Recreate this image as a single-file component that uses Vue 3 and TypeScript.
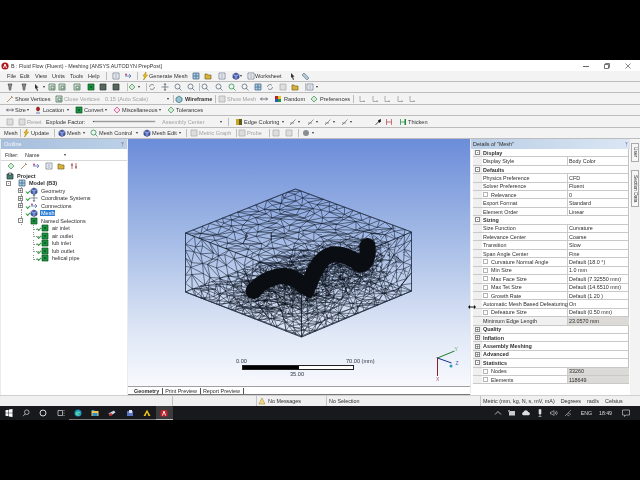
<script setup lang="ts">
type Layer = { d: string; f?: string; s?: string };
type Item = { x: number; kind: 'gap' | 'ico' | 'text' | 'arrow' | 'sep' | 'slider' | 'off'; value?: string; bold?: boolean };

const ICONS: Record<string, Layer[]> = {
  bolt: [{ d: 'M5 0L2 4h2L2.5 8 6.5 3H4.500z', f: '#f4c81c', s: '#b58f10' }],
  cube: [
    { d: 'M4 1l3 1.500v3.500L4 7.500 1 6V2.500z', f: '#4a63b8', s: '#28366f' },
    { d: 'M1 2.500L4 4l3-1.500M4 4v3.500', s: '#c8d2f0' },
  ],
  green: [{ d: 'M1 1h6v6H1z', f: '#1f8f3f', s: '#07551d' }, { d: 'M3 3h2v2H3z', f: '#063' }],
  gbox: [{ d: 'M1 1h6v6H1z', f: '#dfe7df', s: '#3d6b4d' }, { d: 'M3 3h3v3H3z', s: '#3d6b4d' }],
  dbox: [{ d: 'M1 1h6v6H1z', f: '#56685c', s: '#2b3a31' }],
  sheet: [{ d: 'M1 1h6v6H1z', f: '#fff', s: '#5f6f88' }, { d: 'M2.500 3h3M2.500 5h3', s: '#5f6f88' }],
  folder: [{ d: 'M1 2h2l1 1h3v4H1z', f: '#d9b23c', s: '#7a6420' }],
  tree: [{ d: 'M1 4h6M5 2l2 2-2 2', s: '#395ba8' }, { d: 'M1 2.500a1 1 0 102 0 1 1 0 10-2 0', f: '#c2428b' }],
  grid: [{ d: 'M1 1h6v6H1zM1 4h6M4 1v6', f: '#a8d2e8', s: '#3d5c80' }],
  zoom: [{ d: 'M1 3.500a2.500 2.500 0 105 0 2.500 2.500 0 10-5 0M5.200 5.200L7.500 7.500', s: '#4b5f70' }],
  zoomg: [{ d: 'M1 3.500a2.500 2.500 0 105 0 2.500 2.500 0 10-5 0M5.200 5.200L7.500 7.500', s: '#168a3a' }],
  rot: [{ d: 'M1.500 4a2.500 2.500 0 014.500-1.500M6.500 4A2.500 2.500 0 012 5.500', s: '#53616e' }],
  move: [{ d: 'M4 .5v7M.5 4h7M4 .5L3 2M4 .5L5 2M4 7.500L3 6M4 7.500L5 6', s: '#53616e' }],
  pin: [{ d: 'M2 1h4L5 4v2L4 7.500 3 6V4z', f: '#8b8d90', s: '#4b4c50' }],
  axis: [{ d: 'M2 1v5.500h5M5.500 5.500l1.500 1', s: '#8a8f93' }],
  vert: [{ d: 'M1 7L6 2M5 1l2 2', s: '#8f6a30' }],
  wire: [{ d: 'M1 3l3-2 3 2v3l-3 2-3-2z', f: '#9bc3d3', s: '#2b6a70' }],
  red: [{ d: 'M2.500 3a1.500 2 0 103 0 1.500 2 0 10-3 0', f: '#b32222', s: '#7c1010' }, { d: 'M2 7h4', s: '#2b4aa0' }],
  rand: [{ d: 'M1 1h3v3H1z', f: '#b62424' }, { d: 'M4 1h3v3H4z', f: '#e8c22a' }, { d: 'M1 4h3v3H1z', f: '#2b55b8' }, { d: 'M4 4h3v3H4z', f: '#259a3c' }],
  tol: [{ d: 'M4 1l3 3-3 3-3-3z', f: '#d3edd6', s: '#3c8a50' }],
  misc: [{ d: 'M4 1l3 3-3 3-3-3z', f: '#fde', s: '#c03878' }],
  size: [{ d: 'M.5 4h7M2 2.500L.5 4 2 5.500M6 2.500L7.500 4 6 5.500', s: '#445' }],
  dark: [{ d: 'M1.500 7L6.500 1.500', s: '#111' }, { d: 'M4 2.500l2.500-1.500.5 2.500-2 1.500z', f: '#111' }],
  hh: [{ d: 'M1.500 1v6M6.500 1v6M1.500 4h5', s: '#b04444' }],
  thick: [{ d: 'M1.500 1v6M1.500 4h5', s: '#1a8a34' }, { d: 'M5.500 1h1.500v6H5.500z', f: '#1a8a34' }],
  edge: [{ d: 'M1 1h3v6H1z', f: '#c9a420' }, { d: 'M4 1h3v6H4z', f: '#5d5a20' }],
  line: [{ d: 'M1 7L6.500 1.500M1 5h4', s: '#6a6a6a' }],
  dim: [{ d: 'M1 1h6v6H1z', f: '#ddd', s: '#aaa' }],
  dot: [{ d: 'M1 4a3 3 0 106 0 3 3 0 10-6 0', f: '#8a8d90' }],
  cursor: [{ d: 'M2 1l3.500 3.500-1.500.2L5 7.500 4 8 3 5l-1 1z', f: '#333' }],
  tag: [{ d: 'M1 3l2-2 5 5-2 2z', f: '#b3c8d6', s: '#667f90' }],
  bars: [{ d: 'M2 1v6M6 1v6', s: '#b22' }, { d: 'M1 3h2M5 5h2', s: '#224' }],
  proj: [{ d: 'M1 2h6v5H1z', f: '#48806a', s: '#234' }, { d: 'M2.500 1h3v2h-3z', f: '#e3e3c8', s: '#234' }],
};

const ico = (x: number, value: string): Item => ({ x, kind: 'ico', value });
const txt = (x: number, value: string, bold = false): Item => ({ x, kind: 'text', value, bold });
const off = (x: number, value: string): Item => ({ x, kind: 'off', value });
const arr = (x: number): Item => ({ x, kind: 'arrow' });
const sep = (x: number): Item => ({ x, kind: 'sep' });

const rows: { h: number; items: Item[] }[] = [
  { h: 11, items: [txt(7, 'File'), txt(20, 'Edit'), txt(35, 'View'), txt(52, 'Units'), txt(70, 'Tools'), txt(88, 'Help'), sep(106), ico(112, 'sheet'), ico(124, 'tree'), sep(137), ico(141, 'bolt'), txt(149, 'Generate Mesh'), ico(192, 'grid'), ico(204, 'folder'), ico(218, 'sheet'), ico(232, 'cube'), arr(240), ico(247, 'sheet'), txt(255, 'Worksheet'), ico(289, 'cursor'), ico(301, 'tag')] },
  { h: 11, items: [ico(6, 'pin'), ico(20, 'pin'), ico(33, 'cursor'), arr(43), ico(48, 'gbox'), ico(58, 'gbox'), ico(73, 'gbox'), ico(87, 'green'), ico(99, 'dbox'), ico(112, 'dbox'), sep(127), ico(128, 'tol'), arr(138), sep(146), ico(148, 'rot'), ico(161, 'move'), ico(174, 'zoom'), ico(187, 'zoom'), sep(199), ico(201, 'zoom'), ico(215, 'zoom'), ico(228, 'zoomg'), ico(241, 'zoom'), ico(254, 'grid'), ico(266, 'rot'), ico(279, 'dim'), ico(291, 'folder'), sep(305), ico(306, 'sheet'), arr(316)] },
  { h: 12, items: [ico(6, 'vert'), txt(15, 'Show Vertices'), ico(55, 'gbox'), off(64, 'Close Vertices'), off(105, '0.15 (Auto Scale)'), arr(167), sep(173), ico(175, 'wire'), txt(185, 'Wireframe', true), sep(215), ico(218, 'dim'), off(227, 'Show Mesh'), ico(260, 'size'), ico(274, 'rand'), txt(284, 'Random'), ico(310, 'tol'), txt(320, 'Preferences'), sep(353), ico(358, 'axis'), ico(371, 'axis'), ico(383, 'axis'), ico(396, 'axis'), ico(408, 'axis')] },
  { h: 11, items: [ico(6, 'size'), txt(15, 'Size'), arr(27), ico(34, 'red'), txt(43, 'Location'), arr(67), ico(75, 'green'), txt(84, 'Convert'), arr(105), ico(113, 'misc'), txt(122, 'Miscellaneous'), arr(159), ico(167, 'tol'), txt(176, 'Tolerances')] },
  { h: 12, items: [ico(6, 'dim'), ico(18, 'dim'), off(27, 'Reset'), txt(46, 'Explode Factor:'), { x: 93, kind: 'slider' }, off(162, 'Assembly Center'), arr(220), sep(228), ico(235, 'edge'), txt(244, 'Edge Coloring'), arr(282), ico(289, 'line'), arr(298), ico(307, 'line'), arr(316), ico(324, 'line'), arr(333), ico(341, 'line'), arr(350), ico(374, 'dark'), ico(385, 'hh'), ico(399, 'thick'), txt(408, 'Thicken')] },
  { h: 11, items: [txt(4, 'Mesh'), sep(20), ico(22, 'bolt'), txt(31, 'Update'), sep(54), ico(58, 'cube'), txt(67, 'Mesh'), arr(83), ico(90, 'zoomg'), txt(99, 'Mesh Control'), arr(136), ico(143, 'cube'), txt(152, 'Mesh Edit'), arr(179), sep(186), ico(190, 'dim'), off(199, 'Metric Graph'), sep(236), ico(238, 'dim'), off(247, 'Probe'), sep(269), ico(272, 'dim'), ico(285, 'dim'), sep(298), ico(302, 'dot'), arr(312)] },
];

// each slot runs up to the next item so the row stays in normal flow
const slots = rows.map((r) => {
  const withStart: Item[] = r.items[0].x > 0 ? [{ x: 0, kind: 'gap' }, ...r.items] : r.items;
  return { h: r.h, items: withStart.map((it, i) => ({ ...it, w: (withStart[i + 1]?.x ?? it.x + 30) - it.x })) };
});

const tree = [
  { label: 'Project', depth: 0, icon: 'proj', bold: true, exp: '' },
  { label: 'Model (B3)', depth: 1, icon: 'grid', bold: true, exp: '-' },
  { label: 'Geometry', depth: 2, icon: 'cube', exp: '+', check: true },
  { label: 'Coordinate Systems', depth: 2, icon: 'move', exp: '+', check: true },
  { label: 'Connections', depth: 2, icon: 'tree', exp: '+', check: true },
  { label: 'Mesh', depth: 2, icon: 'cube', exp: '', check: true, active: true },
  { label: 'Named Selections', depth: 2, icon: 'green', exp: '-' },
  { label: 'air inlet', depth: 3, icon: 'green', exp: '', check: true },
  { label: 'air outlet', depth: 3, icon: 'green', exp: '', check: true },
  { label: 'lub inlet', depth: 3, icon: 'green', exp: '', check: true },
  { label: 'lub outlet', depth: 3, icon: 'green', exp: '', check: true },
  { label: 'helical pipe', depth: 3, icon: 'green', exp: '', check: true },
];

type Detail = { name: string; value?: string; group?: string; box?: boolean; grey?: boolean };
const details: Detail[] = [
  { name: 'Display', group: '-' },
  { name: 'Display Style', value: 'Body Color' },
  { name: 'Defaults', group: '-' },
  { name: 'Physics Preference', value: 'CFD' },
  { name: 'Solver Preference', value: 'Fluent' },
  { name: 'Relevance', value: '0', box: true },
  { name: 'Export Format', value: 'Standard' },
  { name: 'Element Order', value: 'Linear' },
  { name: 'Sizing', group: '-' },
  { name: 'Size Function', value: 'Curvature' },
  { name: 'Relevance Center', value: 'Coarse' },
  { name: 'Transition', value: 'Slow' },
  { name: 'Span Angle Center', value: 'Fine' },
  { name: 'Curvature Normal Angle', value: 'Default (18.0 °)', box: true },
  { name: 'Min Size', value: '1.0 mm', box: true },
  { name: 'Max Face Size', value: 'Default (7.32550 mm)', box: true },
  { name: 'Max Tet Size', value: 'Default (14.6510 mm)', box: true },
  { name: 'Growth Rate', value: 'Default (1.20 )', box: true },
  { name: 'Automatic Mesh Based Defeaturing', value: 'On' },
  { name: 'Defeature Size', value: 'Default (0.50 mm)', box: true },
  { name: 'Minimum Edge Length', value: '23.0570 mm', grey: true },
  { name: 'Quality', group: '+' },
  { name: 'Inflation', group: '+' },
  { name: 'Assembly Meshing', group: '+' },
  { name: 'Advanced', group: '+' },
  { name: 'Statistics', group: '-' },
  { name: 'Nodes', value: '33260', box: true, grey: true },
  { name: 'Elements', value: '118649', box: true, grey: true },
];

function rng(seed: number) {
  return () => {
    seed = (seed + 0x6d2b79f5) | 0;
    let t = Math.imul(seed ^ (seed >>> 15), 1 | seed);
    t = (t + Math.imul(t ^ (t >>> 7), 61 | t)) ^ t;
    return ((t ^ (t >>> 14)) >>> 0) / 4294967296;
  };
}

type P = [number, number];
const A: P = [296, 189], B: P = [412, 232], C: P = [302, 278], D: P = [186, 233];
const drop = (p: P): P => [p[0], p[1] + 59];
const rand = rng(7);

function faceMesh(a: P, b: P, c: P, d: P, nu: number, nv: number) {
  const pts: P[][] = [];
  for (let j = 0; j <= nv; j++) {
    const line: P[] = [];
    for (let i = 0; i <= nu; i++) {
      const edgeU = i === 0 || i === nu, edgeV = j === 0 || j === nv;
      const u = (i + (edgeU ? 0 : (rand() - 0.5) * 0.75)) / nu;
      const v = (j + (edgeV ? 0 : (rand() - 0.5) * 0.75)) / nv;
      const tx = a[0] + (b[0] - a[0]) * u, ty = a[1] + (b[1] - a[1]) * u;
      const bx = d[0] + (c[0] - d[0]) * u, by = d[1] + (c[1] - d[1]) * u;
      line.push([tx + (bx - tx) * v, ty + (by - ty) * v]);
    }
    pts.push(line);
  }
  let s = '';
  const seg = (p: P, q: P) => { s += `M${p[0].toFixed(1)} ${p[1].toFixed(1)}L${q[0].toFixed(1)} ${q[1].toFixed(1)}`; };
  for (let j = 0; j <= nv; j++) {
    for (let i = 0; i <= nu; i++) {
      if (i < nu) seg(pts[j][i], pts[j][i + 1]);
      if (j < nv) seg(pts[j][i], pts[j + 1][i]);
      if (i < nu && j < nv) {
        if (rand() > 0.5) seg(pts[j][i], pts[j + 1][i + 1]);
        else seg(pts[j][i + 1], pts[j + 1][i]);
      }
    }
  }
  return s;
}

const wirePath =
  faceMesh(A, B, C, D, 14, 14) +
  faceMesh(drop(A), drop(B), drop(C), drop(D), 13, 13) +
  faceMesh(D, C, drop(C), drop(D), 14, 7) +
  faceMesh(C, B, drop(B), drop(C), 14, 7);

const spine: P[] = [[257, 290], [270, 278], [287, 276], [297, 283], [308, 287], [315, 270], [327, 257], [343, 257], [360, 265], [367, 260], [368, 247]];
const gauss = () => (rand() + rand() + rand() - 1.5) / 1.5;

// scattered short strokes: refinement towards the pipe
function scatter(count: number, sx: number, sy: number, dy: number, maxLen: number) {
  let s = '';
  for (let i = 0; i < count; i++) {
    const k = spine[Math.floor(rand() * spine.length)];
    const x = k[0] + gauss() * sx, y = k[1] + dy + gauss() * sy;
    const ang = rand() * Math.PI, len = 2 + rand() * maxLen;
    s += `M${x.toFixed(1)} ${y.toFixed(1)}l${(Math.cos(ang) * len).toFixed(1)} ${(Math.sin(ang) * len * 0.7).toFixed(1)}`;
  }
  return s;
}
const cloud = scatter(1900, 52, 36, 8, 6) + scatter(1100, 17, 17, 0, 4);
const pipePath = 'M254 291C262 281 274 276 286 276C297 277 302 285 308 288C312 280 315 266 325 258C335 250 350 256 360 264C366 266 369 256 368 246';
const hexPath = 'M296 189L412 232V291L302 336L186 292V233Z';
</script>

<template>
  <div class="page">
    <div class="letterbox top"></div>

    <div class="titlebar">
      <svg class="app-logo" viewBox="0 0 8 8"><circle cx="4" cy="4" r="3.600" fill="#b01818" /><path d="M2.500 6L4 2l1.500 4" stroke="#fff" fill="none" /></svg>
      <span class="title-text">B : Fluid Flow (Fluent) - Meshing [ANSYS AUTODYN PrepPost]</span>
      <span class="win-btns">
        <svg viewBox="0 0 6 6"><path d="M0 3.500h6" stroke="#666" /></svg>
        <svg viewBox="0 0 6 6"><path d="M.5 1.500h4v4h-4zM1.500 1.500v-1h4v4h-1" stroke="#555" fill="none" stroke-width=".8" /></svg>
        <svg viewBox="0 0 6 6"><path d="M.5 .5l5 5M5.500 .5l-5 5" stroke="#555" stroke-width=".7" /></svg>
      </span>
    </div>

    <div v-for="(row, r) in slots" :key="r" class="toolrow" :style="{ height: row.h + 'px' }">
      <span v-for="(it, i) in row.items" :key="i" class="slot" :style="{ width: it.w + 'px' }">
        <svg v-if="it.kind === 'ico'" class="ico" viewBox="0 0 8 8">
          <path v-for="(l, k) in ICONS[it.value!]" :key="k" :d="l.d" :fill="l.f ?? 'none'" :stroke="l.s ?? 'none'" stroke-width=".7" />
        </svg>
        <span v-else-if="it.kind === 'text'" class="tool-text" :class="{ bold: it.bold }">{{ it.value }}</span>
        <span v-else-if="it.kind === 'off'" class="tool-text disabled">{{ it.value }}</span>
        <i v-else-if="it.kind === 'arrow'" class="arrow"></i>
        <i v-else-if="it.kind === 'sep'" class="sep"></i>
        <i v-else-if="it.kind === 'slider'" class="slider"></i>
      </span>
    </div>

    <div class="main">
      <section class="outline">
        <header class="outline-head"><span>Outline</span><span class="pin">ᛘ</span></header>
        <div class="filter">
          <span class="filter-label">Filter:</span>
          <span class="filter-value">Name</span>
          <i class="arrow"></i>
        </div>
        <div class="outline-tools">
          <svg v-for="n in ['tol', 'vert', 'tree', 'sheet', 'folder', 'bars']" :key="n" class="ico" viewBox="0 0 8 8">
            <path v-for="(l, k) in ICONS[n]" :key="k" :d="l.d" :fill="l.f ?? 'none'" :stroke="l.s ?? 'none'" stroke-width=".7" />
          </svg>
        </div>
        <ul class="tree">
          <li v-for="t in tree" :key="t.label" class="tree-row" :class="'depth' + t.depth">
            <i v-if="t.exp" class="exp">{{ t.exp }}</i>
            <i v-if="t.check" class="check"></i>
            <svg class="ico" viewBox="0 0 8 8">
              <path v-for="(l, k) in ICONS[t.icon]" :key="k" :d="l.d" :fill="l.f ?? 'none'" :stroke="l.s ?? 'none'" stroke-width=".7" />
            </svg>
            <span class="tree-label" :class="{ bold: t.bold, active: t.active }">{{ t.label }}</span>
          </li>
        </ul>
      </section>

      <section class="center">
        <div class="viewport">
          <svg class="mesh" viewBox="129 139 341 247">
            <defs>
              <clipPath id="box"><path :d="hexPath" /></clipPath>
            </defs>
            <path :d="wirePath" fill="none" stroke="#0a1420" stroke-width=".55" stroke-opacity=".95" />
            <path :d="cloud" fill="none" stroke="#060a12" stroke-width=".42" stroke-opacity=".9" clip-path="url(#box)" />
            <path :d="hexPath" fill="none" stroke="#27344c" stroke-width=".7" />
            <path :d="pipePath" fill="none" stroke="#0a0d12" stroke-width="16" stroke-linecap="round" />
            <!-- triad -->
            <path d="M438 358L455 351" stroke="#1f7d2e" stroke-width="1" />
            <path d="M438 358L452 363" stroke="#1c2f8e" stroke-width="1" />
            <path d="M438 358V376" stroke="#8e1f2a" stroke-width="1" />
            <circle cx="451.500" cy="366" r="1.500" fill="#2b9fb0" />
            <path d="M438 358l-1.500 0 1.500-.8z" fill="#111" />
            <text x="455" y="351" class="axis-label" fill="#5aa06a">Y</text>
            <text x="456" y="365" class="axis-label" fill="#4c62b8">Z</text>
            <text x="436.500" y="381" class="axis-label" fill="#b85a60">X</text>
          </svg>
          <span class="scale-label s0">0.00</span>
          <span class="scale-label s70">70.00 (mm)</span>
          <span class="scale-label s35">35.00</span>
          <div class="scalebar"><i class="half-black"></i><i class="half-white"></i></div>
        </div>
        <div class="tabs">
          <span class="tab bold">Geometry</span><span class="tab">Print Preview</span><span class="tab">Report Preview</span><span class="tab-rest"></span>
        </div>
      </section>

      <section class="details">
        <header class="details-head"><span>Details of "Mesh"</span><span class="pin">ᛘ</span></header>
        <div class="dtable">
          <div v-for="d in details" :key="d.name" class="drow" :class="{ group: d.group }">
            <span class="gutter"><i v-if="d.group" class="exp">{{ d.group }}</i></span>
            <template v-if="d.group">
              <span class="gname">{{ d.name }}</span>
            </template>
            <template v-else>
              <span class="dname" :class="{ 'grey-name': d.name === 'Minimum Edge Length' }"><i v-if="d.box" class="box"></i>{{ d.name }}</span>
              <span class="dval" :class="{ grey: d.grey }">{{ d.value }}</span>
            </template>
          </div>
        </div>
      </section>

      <aside class="strip">
        <span class="vtab short">User</span>
        <span class="vtab long">Section Data</span>
      </aside>

      <svg class="resize-cursor" viewBox="0 0 8 6"><path d="M0 3l2-2v1.500h4V1l2 2-2 2V3.500H2V5z" fill="#111" /></svg>
    </div>

    <div class="statusbar">
      <span class="cell c1"></span>
      <span class="cell c2"></span>
      <span class="cell c3"><svg class="ico" viewBox="0 0 8 8"><path d="M4 1l3 6H1z" fill="#f2d98a" stroke="#a58a40" stroke-width=".6" /></svg>No Messages</span>
      <span class="cell c4">No Selection</span>
      <span class="cell c5"><span>Metric (mm, kg, N, s, mV, mA)</span><span>Degrees</span><span>rad/s</span><span>Celsius</span></span>
    </div>

    <div class="taskbar">
      <span class="task"><svg viewBox="0 0 8 8"><path d="M.5 1.200l3-.5v3H.5zM4 .6l3.500-.5v3.600H4zM.5 4.300h3v3l-3-.5zM4 4.300h3.500v3.600L4 7.400z" fill="#fff" /></svg></span>
      <span class="task"><svg viewBox="0 0 8 8"><circle cx="4.800" cy="3.200" r="2.300" fill="none" stroke="#ddd" stroke-width=".7" /><path d="M3.200 4.900L1 7.200" stroke="#ddd" stroke-width=".7" /></svg></span>
      <span class="task"><svg viewBox="0 0 8 8"><circle cx="4" cy="4" r="3" fill="none" stroke="#eee" stroke-width=".9" /></svg></span>
      <span class="task"><svg viewBox="0 0 8 8"><path d="M1 1.500h4.500v5H1zM6.500 1.500h1M6.500 4h1M6.500 6.500h1" fill="none" stroke="#ddd" stroke-width=".7" /></svg></span>
      <span class="task app"><svg viewBox="0 0 8 8"><circle cx="4" cy="4" r="3.500" fill="#1b8fc4" /><path d="M1.500 4.200C3 1.800 6 2 6.500 4.300H3.300C3.500 5.600 5.500 6 6.800 5.300 5.400 7.600 1.600 7 1.500 4.200z" fill="#5fe0a0" /></svg></span>
      <span class="task app"><svg viewBox="0 0 8 8"><path d="M.5 2h7v5h-7z" fill="#f0c850" /><path d="M.5 1h3v1h-3zM1.500 4h5v3h-5z" fill="#2f8fc8" /></svg></span>
      <span class="task app"><svg viewBox="0 0 8 8"><path d="M.5 4.500L6 1.500 7.500 3.500 2 7z" fill="#cfd6e6" /><path d="M.5 5l3-1 .5 2.500L2 7z" fill="#b3252b" /></svg></span>
      <span class="task app"><svg viewBox="0 0 8 8"><path d="M1 2h6v5H1z" fill="#5b74c4" /><path d="M3 1h3v3H3z" fill="#d8e0f4" /></svg></span>
      <span class="task app"><svg viewBox="0 0 8 8"><path d="M4 .8L7.500 7H5.500L4 3.500 2.500 7H.5z" fill="#f2c51d" /><path d="M3 7h2L4 4.500z" fill="#222" /></svg></span>
      <span class="task app active"><svg viewBox="0 0 8 8"><path d="M1.500 1h5l1 1.500v4L6.500 7.500h-5L.5 6.500v-4z" fill="#c5202b" /><path d="M2.500 6.500L4 2l1.500 4.500" fill="none" stroke="#fff" stroke-width=".9" /></svg></span>
      <span class="tray">
        <svg viewBox="0 0 8 8"><path d="M1 5.500L4 2.500 7 5.500" fill="none" stroke="#ddd" stroke-width=".8" /></svg>
        <svg viewBox="0 0 8 8"><path d="M1 2h6v4.500H1z" fill="#ccc" /><path d="M0 1h2v2H0z" fill="#888" /></svg>
        <svg viewBox="0 0 8 8"><path d="M1 6.200a1.800 1.800 0 01.500-3.300 2.500 2.500 0 014.700 0 1.700 1.700 0 01.500 3.300z" fill="#ddd" /></svg>
        <svg viewBox="0 0 8 8"><path d="M3 .5h2v4.500H3zM4 5v2M2.500 7.500h3" stroke="#ddd" fill="#ddd" stroke-width=".6" /></svg>
        <svg viewBox="0 0 8 8"><path d="M.5 3H2L4 1.500v5L2 5H.5zM5.200 2.800a1.800 1.800 0 010 2.400M6.200 1.800a3 3 0 010 4.400" stroke="#ccc" fill="none" stroke-width=".6" /></svg>
        <svg viewBox="0 0 8 8"><path d="M1 7L7 1M2.500 5.500l3 1.500M4 4l3 1.500" stroke="#bbb" fill="none" stroke-width=".6" /></svg>
        <span class="lang">ENG</span>
        <span class="clock">18:49</span>
        <svg class="notif" viewBox="0 0 8 8"><path d="M.5 1h7v5H4L2.500 7.500V6H.5z" fill="none" stroke="#ddd" stroke-width=".6" /></svg>
      </span>
    </div>

    <div class="letterbox bottom"></div>
  </div>
</template>

<style>
html, body { margin: 0; background: #000; overflow: hidden; }
</style>

<style scoped>
* { box-sizing: border-box; }
.page {
  width: 640px;
  height: 480px;
  display: flex;
  flex-direction: column;
  background: #000;
  font-family: "Liberation Sans", Arial, sans-serif;
  font-size: 5.4px;
  color: #2e2e2e;
  overflow: hidden;
  filter: blur(0.3px);
}
.letterbox.top { height: 60px; flex: none; background: #000; }
.letterbox.bottom { height: 60px; flex: none; background: #000; }
ul { list-style: none; margin: 0; padding: 0; }
i { font-style: normal; display: block; }

.titlebar {
  height: 11px;
  flex: none;
  display: flex;
  align-items: center;
  padding-left: 1px;
  background: #fff;
  position: relative;
}
.app-logo { width: 8px; height: 8px; margin-right: 2px; }
.title-text { font-size: 5.37px; color: #333; }
.win-btns { margin-left: auto; display: flex; gap: 15px; padding-right: 9px; }
.win-btns svg { width: 6px; height: 6px; }

.toolrow {
  flex: none;
  display: flex;
  align-items: center;
  background: #f3f3f3;
  border-bottom: 1px solid #bcbcbc;
  overflow: hidden;
}
.slot { flex: none; display: flex; align-items: center; height: 100%; white-space: nowrap; }
.ico { width: 8px; height: 8px; flex: none; }
.tool-text { font-size: 5.6px; color: #333; }
.bold { font-weight: 700; }
.disabled { color: #a2a2a2; }
.arrow { width: 0; height: 0; border: 1.5px solid transparent; border-top: 2px solid #333; border-bottom: 0; }
.sep { width: 1px; height: 8px; background: #bdbdbd; }
.slider { width: 62px; height: 1px; background: #9a9a9a; border-left: 1px solid #555; box-shadow: 0 0 0 .3px #bbb; }

.main {
  flex: 1;
  min-height: 0;
  display: grid;
  grid-template-columns: 127px 344px 159px 10px;
  background: #e9eaed;
  position: relative;
}
.outline { background: #fff; margin-left: 1px; display: flex; flex-direction: column; min-height: 0; }
.outline-head {
  height: 10px;
  flex: none;
  padding: 0 3px;
  display: flex;
  justify-content: space-between;
  align-items: center;
  background: linear-gradient(90deg, #a6bedc, #bcd0e8);
  color: #f4f7fb;
  font-size: 5.6px;
}
.pin { font-size: 5px; color: #334; }
.filter {
  height: 12px;
  flex: none;
  display: flex;
  align-items: center;
  padding-left: 4px;
  border-bottom: 1px solid #d8d8d8;
}
.filter-label { width: 20px; }
.filter-value { width: 39px; }
.outline-tools {
  height: 10px;
  flex: none;
  display: flex;
  align-items: center;
  gap: 4.500px;
  padding-left: 6px;
}
.tree { padding-top: 1px; }
.tree-row { height: 7.500px; display: flex; align-items: center; gap: 1px; position: relative; white-space: nowrap; }
.depth0 { padding-left: 5px; }
.depth1 { padding-left: 17px; }
.depth2 { padding-left: 29px; }
.depth3 { padding-left: 40px; }
.depth2::before { content: ""; position: absolute; left: 19.500px; top: 0; bottom: 0; border-left: .6px dotted #999; }
.depth3::before { content: ""; position: absolute; left: 31.500px; top: 0; height: 4px; width: 5px; border-left: .6px dotted #999; border-bottom: .6px dotted #999; }
.tree-label { margin-left: 1px; padding: 0 1px; font-size: 5.500px; }
.tree-label.active { background: #2f7fd8; color: #fff; }
.exp {
  width: 5px;
  height: 5px;
  border: .6px solid #888;
  background: #fff;
  font-size: 5px;
  line-height: 3.500px;
  text-align: center;
  flex: none;
  color: #222;
}
.tree-row > .exp { position: absolute; z-index: 1; }
.depth1 > .exp { left: 5px; }
.depth2 > .exp { left: 17px; }
.check { width: 4px; height: 3px; border-left: 1px solid #2c9a3c; border-bottom: 1px solid #2c9a3c; transform: rotate(-45deg); flex: none; position: absolute; margin-left: -4px; margin-top: 1px; }

.center { display: flex; flex-direction: column; min-height: 0; padding-left: 1px; padding-right: 1px; }
.viewport {
  flex: none;
  height: 247px;
  position: relative;
  background: linear-gradient(180deg, #6b8cd9 0%, #a4bbe6 40%, #dfe7f6 78%, #f7f9fd 100%);
  overflow: hidden;
}
.mesh { position: absolute; inset: 0; width: 100%; height: 100%; }
.axis-label { font-family: "Liberation Sans", Arial, sans-serif; font-size: 5px; }
.scale-label { position: absolute; font-size: 5.600px; color: #2f3640; }
.s0 { left: 108px; top: 219px; }
.s70 { left: 218px; top: 219px; }
.s35 { left: 162px; top: 232px; }
.scalebar { position: absolute; left: 114px; top: 226px; width: 112px; height: 5px; display: flex; border: .6px solid #222; }
.half-black { width: 56px; background: #000; }
.half-white { flex: 1; background: #fff; }
.tabs { height: 9px; flex: none; display: flex; align-items: center; background: #fff; border-top: 1px solid #a0a0a0; border-bottom: 1px solid #777; padding-left: 4px; }
.tab { font-size: 5.400px; padding: 0 3px 0 2px; border-right: .7px solid #555; white-space: nowrap; }
.tab.bold { font-weight: 700; }
.tab-rest { flex: 1; }

.details { display: flex; flex-direction: column; min-height: 0; background: #fff; }
.details-head {
  height: 10px;
  flex: none;
  padding: 0 2px;
  display: flex;
  justify-content: space-between;
  align-items: center;
  background: linear-gradient(90deg, #b9cee6, #dbe6f3);
  font-size: 5.400px;
}
.dtable { padding-left: 2px; width: 158px; }
.drow {
  height: 8.420px;
  display: grid;
  grid-template-columns: 9px 86px 61px;
  align-items: center;
  border-bottom: .6px solid #c9c9c9;
  border-right: .6px solid #c0c0c0;
  background: #fff;
  white-space: nowrap;
}
.drow.group { grid-template-columns: 9px 1fr; }
.gutter { background: #f0f0f0; height: 100%; display: flex; align-items: center; justify-content: center; }
.gname { font-weight: 700; padding-left: 1px; }
.dname { padding-left: 1px; height: 100%; display: flex; align-items: center; border-right: .6px solid #c9c9c9; overflow: visible; }
.grey-name { background: #f0f0f0; }
.dval { padding-left: 1px; height: 100%; display: flex; align-items: center; }
.dval.grey { background: #dcdad6; }
.box { width: 5px; height: 5px; border: .6px solid #b5b5b5; background: #fff; margin-right: 3px; flex: none; }

.strip { display: flex; flex-direction: column; padding: 4px 0 0 1px; gap: 8px; background: #f3f3f3; }
.vtab {
  width: 8px;
  writing-mode: vertical-rl;
  font-size: 4.800px;
  border: .6px solid #aaa;
  background: #f6f6f6;
  display: flex;
  align-items: center;
  justify-content: center;
}
.vtab.short { height: 19px; }
.vtab.long { height: 37px; }
.resize-cursor { position: absolute; left: 468px; top: 165px; width: 8px; height: 6px; }

.statusbar {
  height: 11px;
  flex: none;
  display: flex;
  background: #f0f0f0;
  border-top: 1px solid #d0d0d0;
}
.cell { height: 100%; display: flex; align-items: center; border-right: .7px solid #c4c4c4; white-space: nowrap; font-size: 5.400px; }
.c1 { width: 173px; }
.c2 { width: 84px; }
.c3 { width: 70px; padding-left: 1px; gap: 2px; }
.c4 { width: 154px; padding-left: 2px; }
.c5 { flex: 1; padding-left: 2px; gap: 6px; border-right: 0; }

.taskbar {
  height: 14px;
  flex: none;
  display: flex;
  align-items: stretch;
  background: #17191c;
  color: #ddd;
}
.task { width: 17.300px; display: flex; align-items: center; justify-content: center; flex: none; }
.task svg { width: 8px; height: 8px; }
.task.app { border-bottom: 1px solid #7a7a7a; }
.task.active { background: #3b3b3d; border-bottom-color: #b9b9b9; }
.tray { margin-left: auto; display: flex; align-items: center; gap: 6px; padding-right: 10px; font-size: 5.200px; }
.tray svg { width: 8px; height: 8px; }
.lang { margin-left: 3px; }
.clock { margin-left: 1px; }
.notif { margin-left: 4px; }
</style>
